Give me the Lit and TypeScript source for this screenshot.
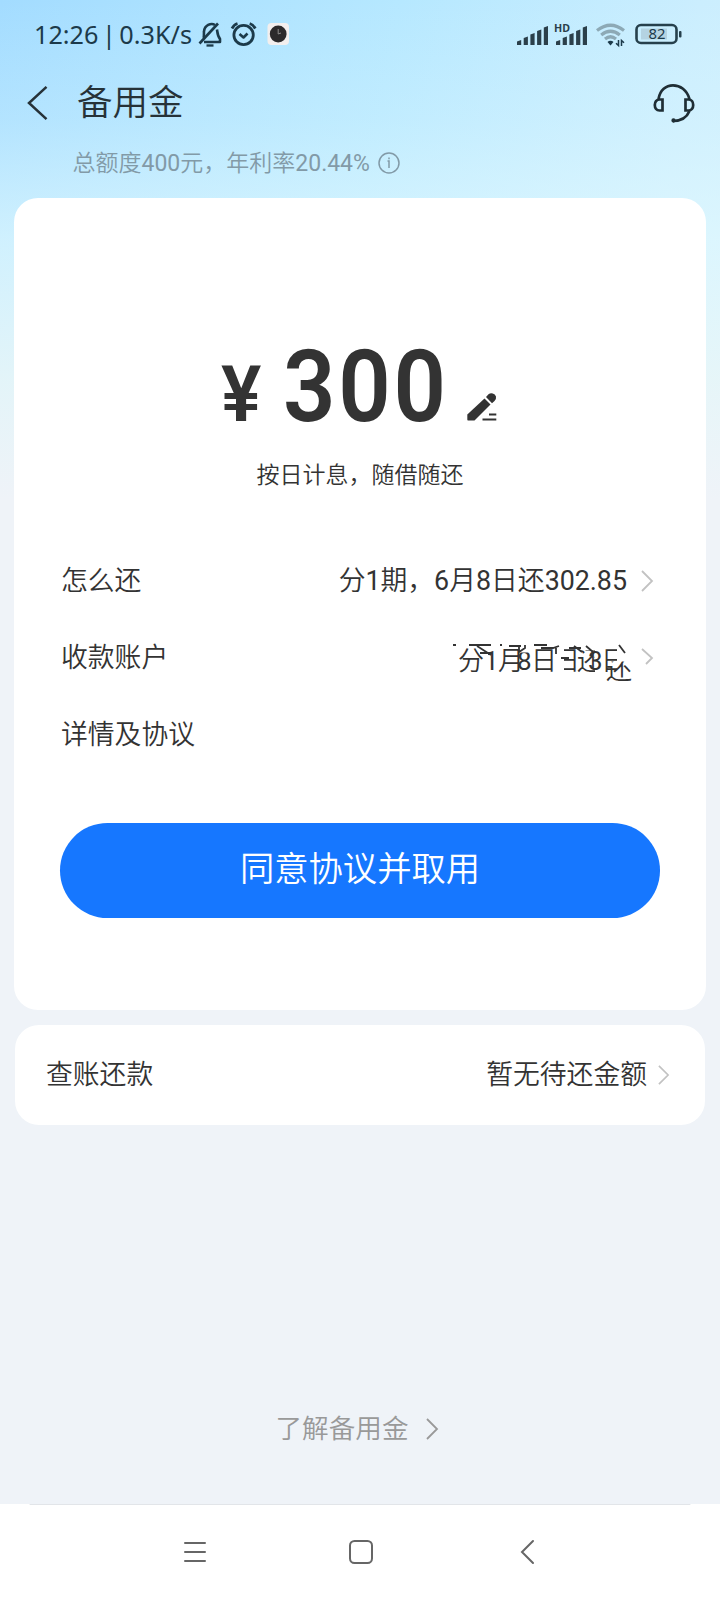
import { LitElement, html, css, svg } from "lit";
import { customElement, property } from "lit/decorators.js";

@customElement("chevron-icon")
class ChevronIcon extends LitElement {
  @property({ type: Number }) w = 12;
  @property({ type: Number }) h = 22;
  @property() d = "M1 1L11 11L1 21";
  static styles = css`
    :host { display: block; flex: none; }
    svg { display: block; overflow: visible; }
    path { fill: none; stroke: currentColor; stroke-width: var(--sw, 1.8); }
  `;
  render() {
    return html`<svg width=${this.w} height=${this.h} viewBox="0 0 12 22" preserveAspectRatio="none"><path d=${this.d} /></svg>`;
  }
}

@customElement("status-bar")
class StatusBar extends LitElement {
  static styles = css`
    :host { display: flex; height: 68px; padding: 0 38px 0 34px; align-items: center; justify-content: space-between; box-sizing: border-box; color: #1c3a4a; }
    .side { display: flex; align-items: center; }
    .time { font: 450 25.2px/36px "Noto Sans", sans-serif; white-space: pre; width: 164px; letter-spacing: 0; word-spacing: -3px; }
    svg { display: block; overflow: visible; }
    .batt { font: 15px "Noto Sans", sans-serif; fill: #1c3a4a; }
    .hd { font: 700 10px "Noto Sans", sans-serif; fill: #2b3f4a; }
  `;
  bars(x: number) {
    return [5, 8.5, 12, 15.5, 19].map((h, i) => {
      const l = x + i * 6.7;
      return svg`<path d="M${l} 45V${45 - h + 1.6}L${l + 4.2} ${45 - h}V45Z" fill="#2b3f4a" />`;
    });
  }
  render() {
    return html`
      <div class="side">
        <div class="time">12:26 | 0.3K/s</div>
        <svg width="94" height="28" viewBox="198 20 94 28" fill="none" stroke="#1c3a4a" stroke-width="2.3" stroke-linejoin="round">
          <path d="M199.500 43.500L218 23.500" stroke-width="2.600" />
          <path d="M203.500 38C204.300 36.500 203.800 33 204 31.500C204.500 25.500 211 22.300 215 25" stroke-width="2.600" />
          <path d="M217 29.500C217.500 33 217.500 36 220 38.800V42H204" stroke-width="2.600" />
          <path d="M206.500 45.500H213.500" />
          <circle cx="243.600" cy="35" r="9.700" stroke-width="2.800" />
          <path d="M239.500 34L243.500 37.500L247.500 33.500" stroke-width="2.600" />
          <path d="M232 28.500Q234 24.500 237.500 23.500M249.700 23.500Q253.200 24.500 255.300 28.500" stroke-width="2.800" />
          <rect x="267.500" y="23" width="21.500" height="22" rx="4" fill="#f3efee" stroke="none" />
          <circle cx="278.200" cy="34" r="8.400" fill="#2c2a2b" stroke="none" />
          <path d="M278.200 29V34L281 33" stroke="#8b8988" stroke-width="1" />
        </svg>
      </div>
      <svg width="166" height="28" viewBox="516 20 166 28">
        ${this.bars(517)}${this.bars(556)}
        <text class="hd" x="554" y="32" textLength="16" lengthAdjust="spacingAndGlyphs">HD</text>
        <g fill="none" stroke="#8da9b5" stroke-width="3.200">
          <path d="M597 30.500Q610.500 20 624 30.500" />
          <path d="M601.200 35Q610.500 27.500 619.800 35" />
          <path d="M605 39Q610.500 34.500 616 39" />
        </g>
        <path d="M607.500 42A4 4 0 0 1 613.500 42L610.500 45.500Z" fill="#1c3a4a" />
        <path d="M618.500 40V45.500L616 43.200M621.500 46V40.500L624 42.800" fill="none" stroke="#1c3a4a" stroke-width="1.500" />
        <rect x="636.500" y="25" width="40" height="18" rx="4.500" fill="none" stroke="#26404c" stroke-width="2.600" />
        <rect x="641" y="28.500" width="26" height="11" fill="#b4d3e2" />
        <rect x="679" y="31" width="2.500" height="6.500" rx="1" fill="#26404c" />
        <text class="batt" x="648.500" y="39.300" textLength="17" lengthAdjust="spacingAndGlyphs">82</text>
      </svg>
    `;
  }
}

@customElement("app-root")
class AppRoot extends LitElement {
  static styles = css`
    :host {
      display: flex; flex-direction: column; width: 720px; height: 1600px; overflow: hidden; box-sizing: border-box;
      color: #333; font: 350 26.800px/40px Roboto, "Noto Sans CJK SC", sans-serif;
      background:
        linear-gradient(180deg, rgba(239,243,248,0) 0, rgba(226,249,254,0.25) 120px, rgba(226,249,254,0.7) 240px, rgba(232,246,248,0.92) 380px, #eff3f8 500px),
        linear-gradient(100deg, #a3dcff 0, #b6e8ff 40%, #cbeefe 70%, #d6f1fe 100%);
    }
    b { font-weight: 400; }
    .title-bar { display: flex; align-items: center; height: 70px; padding: 0 25px 0 27px; }
    .title { font-size: 35.500px; line-height: 48px; margin: -1px auto 0 29px; color: #263238; }
    svg { display: block; flex: none; overflow: visible; }
    .sub { display: flex; align-items: center; height: 50px; padding-left: 72.500px; font-size: 23px; gap: 8.500px; color: #829aa7; }
    .sub span { margin-top: 1px; }
    .card { display: flex; flex-direction: column; margin: 10px 14px 0; height: 812px; border-radius: 24px; background: #fff; padding: 147px 46px 0; box-sizing: border-box; }
    .amount { display: flex; align-items: flex-end; margin-left: 161px; height: 76px; }
    .yen, .num { font-weight: 600; transform-origin: 0 100%; white-space: nowrap; }
    .yen { width: 62px; font-size: 78px; line-height: 56px; margin-bottom: -2px; transform: scaleX(0.97); }
    .num { width: 183.500px; font-size: 101px; line-height: 71px; letter-spacing: 3px; margin-bottom: -1px; transform: scaleX(0.91); }
    .amount svg { margin-bottom: -1px; }
    .tip { font-size: 23px; line-height: 36px; text-align: center; margin: 37px 0 48px; }
    .row { display: flex; align-items: center; height: 77px; padding: 0 7px 0 1px; color: #333; }
    .row .val { margin-left: auto; padding-right: 14px; }
    chevron-icon { color: #c2c2c2; }
    .btn { display: flex; align-items: center; justify-content: center; height: 95px; flex: none; border-radius: 48px; margin-top: 50px; background: #1677ff; color: #fff; font-size: 34.300px; padding-bottom: 4px; box-sizing: border-box; }
    .glitch { position: relative; width: 182px; height: 48px; margin: 20px 6px 0 auto; overflow: hidden; font-size: 26px; }
    .glitch span { position: absolute; line-height: 36px; top: -1px; }
    .g0 { left: 5px; }
    .g1 { left: 31px; clip-path: inset(8px 0 0 4px); font-weight: 400; }
    .g2 { left: 45px; }
    .g3 { left: 64px; clip-path: inset(10px 0 0 0); font-weight: 400; }
    .g4 { left: 78px; }
    .g5 { left: 101px; clip-path: inset(0 0 0 10px); }
    .g6 { left: 124px; clip-path: inset(8px 8px 0 0); }
    .g7 { left: 135px; font-weight: 400; }
    .g8 { left: 148px; clip-path: inset(0 10px 0 0); }
    .glitch .g9 { left: 153px; top: 8px; clip-path: inset(10px 0 0 0); }
    .glitch svg { position: absolute; left: 0; top: 0; }
    .bill { display: flex; align-items: center; margin: 15px 15px 0; height: 100px; border-radius: 24px; background: #fff; padding: 0 36px 0 31px; box-sizing: border-box; }
    .bill .val { margin: 0 11px 0 auto; }
    .learn { display: flex; align-items: center; justify-content: center; gap: 18px; margin-top: auto; margin-bottom: 55px; color: #999; font-size: 26.600px; padding-right: 6px; }
    .learn chevron-icon { color: #999; }
    .nav { height: 96px; flex: none; background: #fff; }
  `;
  render() {
    return html`
      <status-bar></status-bar>
      <div class="title-bar">
        <svg width="21" height="34" viewBox="0 0 21 34" fill="none" stroke="#263238" stroke-width="2.500"><path d="M19.500 .8L2 17L19.500 33.200" /></svg>
        <div class="title">备用金</div>
        <svg width="42" height="40" viewBox="0 0 42 40" fill="none" stroke="#1f2e35" stroke-width="2.700">
          <path d="M5.500 16C7 7 13 2.300 20 2.300S34 7 36.500 16" />
          <path d="M9.500 16.500H6.500C3.500 16.500 1.800 19 1.800 22S3.500 27.500 6.500 27.500H9.500Z" />
          <path d="M32.500 16.500H35.500C38.500 16.500 40.200 19 40.200 22S38.500 27.500 35.500 27.500H32.500Z" />
          <path d="M36.500 28C34 34 28.500 38 20 38" />
          <circle cx="20.500" cy="37.500" r=".8" />
        </svg>
      </div>
      <div class="sub">
        <span>总额度<b>400</b>元，年利率<b>20.44%</b></span>
        <svg width="22" height="22" viewBox="0 0 22 22" fill="none" stroke="#829aa7" stroke-width="1.500"><circle cx="11" cy="11" r="10" /><path d="M9.500 9H11V16M11 5.500V7.200" /></svg>
      </div>
      <div class="card">
        <div class="amount">
          <span class="yen">¥</span><span class="num">300</span>
          <svg width="30" height="30" viewBox="0 0 30 30" fill="#333">
            <path d="M17.500 6.500L23.500 12.500L7.500 28.500H1Q.3 28.500 .3 27.500V22.500Z" />
            <path d="M19 5L21.500 2.300A5 5 0 0 1 29 4.500Q29.500 7.500 27.500 9L25 11.300Z" />
            <path d="M22 21.500H29.300V23.500H22ZM15.500 26.500H29.300V28.500H15.500Z" />
          </svg>
        </div>
        <div class="tip">按日计息，随借随还</div>
        <div class="row"><span>怎么还</span><span class="val">分<b>1</b>期，<b>6</b>月<b>8</b>日还<b>302.85</b></span><chevron-icon></chevron-icon></div>
        <div class="row">
          <span>收款账户</span>
          <div class="glitch">
            <span class="g0">分</span><span class="g1">1</span><span class="g2">月</span><span class="g3">8</span><span class="g4">日</span><span class="g5">日</span><span class="g6">还</span><span class="g7">3</span><span class="g8">日</span><span class="g9">还</span>
            <svg width="182" height="48" fill="none" stroke="#333" stroke-width="1.800">
              <path d="M0 1H3M16 1H38M24 2L38 11M27 9H39M47 1H49M56 2H68M66 1V8L72 4V1M81 1H94M88 4H100L106 2M103 4V10M108 14H116M116 4H128M121 2L129 8M133 2L140 8M166 1L172 9" />
            </svg>
          </div>
          <chevron-icon d="M1 2L11 11L5 17"></chevron-icon>
        </div>
        <div class="row"><span>详情及协议</span></div>
        <div class="btn">同意协议并取用</div>
      </div>
      <div class="bill"><span>查账还款</span><span class="val">暂无待还金额</span><chevron-icon w="11" h="20"></chevron-icon></div>
      <div class="learn"><span>了解备用金</span><chevron-icon></chevron-icon></div>
      <div class="nav">
        <svg width="720" height="96" fill="none" stroke="#666" stroke-width="2" stroke-linecap="round">
          <path d="M30 .5H690" stroke="#e2e5e9" stroke-width="1" />
          <path d="M185 39H205M185 48H205M185 57H205" />
          <rect x="350" y="37" width="22" height="22" rx="4.500" />
          <path d="M533 37L522 48L533 59" />
        </svg>
      </div>
    `;
  }
}
